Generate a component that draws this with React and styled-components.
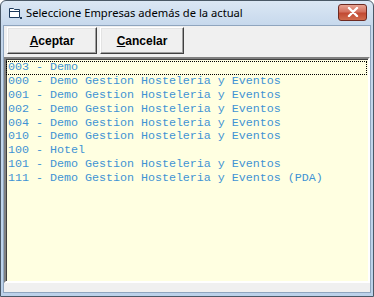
import React from "react";
import styled, { createGlobalStyle } from "styled-components";

const GlobalStyle = createGlobalStyle`
  html, body {
    margin: 0;
    padding: 0;
    width: 374px;
    height: 297px;
    overflow: hidden;
    background: #ffffff;
  }
`;

// --------------------------
// -- Styled Subcomponents --
// --------------------------
const Window = styled.div`
  box-sizing: border-box;
  width: 374px;
  height: 297px;
  display: flex;
  flex-direction: column;
  border: 1px solid #4a5866;
  border-radius: 6px 6px 0 0;
  background: linear-gradient(to bottom, #dbe7f4 0px, #c6d8ec 25px, #bcd2ea 100%);
  padding: 0 2px 3px 2px;
`;

const TitleBar = styled.div`
  height: 24px;
  display: flex;
  align-items: center;
  padding-left: 5px;
  gap: 4px;
  font-family: "Noto Sans", "Open Sans", sans-serif;
  font-size: 11.2px;
  color: #000000;
`;

const TitleText = styled.span`
  flex: 1;
  white-space: nowrap;
  margin-top: -1px;
`;

const CloseButton = styled.div`
  width: 29px;
  height: 17px;
  margin-right: 4px;
  margin-top: -2px;
  box-sizing: border-box;
  border: 1px solid #6d2a22;
  border-radius: 3px;
  background: linear-gradient(to bottom, #e8a493 0%, #d4715f 45%, #c24a33 55%, #d06c4e 100%);
  display: flex;
  align-items: center;
  justify-content: center;
`;

const Client = styled.div`
  flex: 1;
  display: flex;
  flex-direction: column;
  background: #f0f0f0;
  border: 1px solid #8fa5be;
  padding-bottom: 9px;
  min-height: 0;
`;

const Toolbar = styled.div`
  display: flex;
  gap: 3px;
  padding: 1px 0 3px 3px;
`;

const Button = styled.button`
  box-sizing: border-box;
  width: ${(p) => p.$width}px;
  height: 27px;
  padding: 0;
  background: #f0f0f0;
  border: 1px solid;
  border-color: #ffffff #404040 #404040 #ffffff;
  box-shadow: inset -1px -1px 0 #a0a0a0, inset 1px 1px 0 #e3e3e3;
  font-family: "Liberation Sans", Arial, sans-serif;
  font-weight: bold;
  font-size: 12px;
  color: #000000;

  u {
    text-decoration: underline;
  }
`;

const List = styled.div`
  flex: 1;
  background: #ffffe1;
  border: 2px solid;
  border-color: #808080 #ffffff #ffffff #808080;
  box-shadow: inset 1px 1px 0 #404040;
  padding: 1px 1px 1px 0;
  font-family: "Liberation Mono", "Courier New", monospace;
  font-size: 11.67px;
  color: #3f93d4;
`;

const Row = styled.div`
  height: 13.875px;
  line-height: 13.875px;
  padding-left: 2px;
  white-space: pre;
  box-sizing: border-box;
  outline: ${(p) => (p.$focused ? "1px dotted #000000" : "none")};
  outline-offset: -1px;
  margin-top: ${(p) => (p.$focused ? "1px" : "0")};
`;

// --------------------
// -- Main Component --
// --------------------
const empresas = [
  "003 - Demo",
  "000 - Demo Gestion Hosteleria y Eventos",
  "001 - Demo Gestion Hosteleria y Eventos",
  "002 - Demo Gestion Hosteleria y Eventos",
  "004 - Demo Gestion Hosteleria y Eventos",
  "010 - Demo Gestion Hosteleria y Eventos",
  "100 - Hotel",
  "101 - Demo Gestion Hosteleria y Eventos",
  "111 - Demo Gestion Hosteleria y Eventos (PDA)",
];

function WindowIcon() {
  return (
    <svg width="14" height="14" viewBox="0 0 14 14">
      <path d="M1.5 2.5h4l1 1h5v8h-10z" fill="#ffffff" stroke="#1d3a5c" strokeWidth="1" />
      <path d="M1.5 5.5h10" stroke="#1d3a5c" strokeWidth="1" />
      <rect x="12" y="11" width="2" height="2" fill="#1d3a5c" />
    </svg>
  );
}

export default function App() {
  return (
    <>
      <GlobalStyle />
      <Window>
        <TitleBar>
          <WindowIcon />
          <TitleText>Seleccione Empresas además de la actual</TitleText>
          <CloseButton>
            <svg width="12" height="10" viewBox="0 0 12 10">
              <path d="M2 1l8 8M10 1l-8 8" stroke="#ffffff" strokeWidth="2.4" strokeLinecap="round" />
            </svg>
          </CloseButton>
        </TitleBar>
        <Client>
          <Toolbar>
            <Button $width={90}>
              <u>A</u>ceptar
            </Button>
            <Button $width={84}>
              <u>C</u>ancelar
            </Button>
          </Toolbar>
          <List>
            {empresas.map((e, i) => (
              <Row key={e} $focused={i === 0}>
                {e}
              </Row>
            ))}
          </List>
        </Client>
      </Window>
    </>
  );
}
